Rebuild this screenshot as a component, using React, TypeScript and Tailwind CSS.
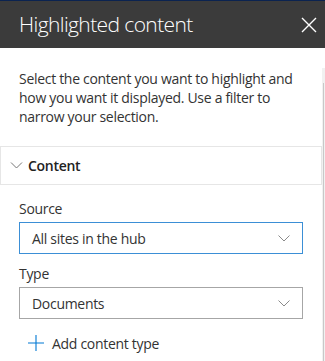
function Chevron({ className }: { className?: string }) {
    return (
        <svg viewBox="0 0 12 7" className={className} fill="none" stroke="currentColor" strokeWidth="1">
            <path d="M0.5 0.5 L6 6 L11.5 0.5" />
        </svg>
    );
}

function Dropdown({ value, active }: { value: string; active?: boolean }) {
    return (
        <div
            className={`mt-[4px] h-[32px] flex items-center justify-between pl-[12px] pr-[12px] border ${
                active ? "border-[#3b8fd6]" : "border-[#a6a6a6]"
            }`}
        >
            <span className="text-[14px] text-[#333]">{value}</span>
            <Chevron className="w-[12px] h-[7px] text-[#8a8a8a]" />
        </div>
    );
}

export default function App() {
    return (
        <div className="w-[325px] h-[361px] overflow-hidden bg-white font-['Open_Sans',sans-serif] tracking-[-0.3px]">
            <header className="border-t border-[#0b2350] h-[48px] bg-[#3b3b3b] flex items-center justify-between pl-[19px] pr-[8px]">
                <h1 className="text-[21px] font-light text-white tracking-[-0.6px]">Highlighted content</h1>
                <svg viewBox="0 0 16 16" className="w-[16px] h-[16px] text-white" stroke="currentColor" strokeWidth="1.4">
                    <path d="M1 1 L15 15 M15 1 L1 15" />
                </svg>
            </header>

            <div className="flex">
                <main className="w-[322px] shrink-0">
                    <p className="pt-[21px] px-[19px] text-[14px] leading-[19px] text-[#333]">
                        Select the content you want to highlight and how you want it displayed. Use a filter to narrow
                        your selection.
                    </p>

                    <div className="mt-[20px] h-[39px] border border-[#e6e6e6] flex items-center pl-[9px]">
                        <Chevron className="w-[13px] h-[7px] text-[#777]" />
                        <span className="ml-[5px] text-[14px] font-semibold text-[#222]">Content</span>
                    </div>

                    <div className="px-[19px]">
                        <div className="mt-[14px] text-[14px] leading-[19px] text-[#333]">Source</div>
                        <Dropdown value="All sites in the hub" active />

                        <div className="mt-[10px] text-[14px] leading-[19px] text-[#333]">Type</div>
                        <Dropdown value="Documents" />

                        <div className="mt-[8px] h-[32px] flex items-center pl-[9px]">
                            <svg viewBox="0 0 16 16" className="w-[16px] h-[16px] text-[#0078d4]" stroke="currentColor" strokeWidth="1.1">
                                <path d="M8 0 V16 M0 8 H16" />
                            </svg>
                            <span className="ml-[8px] text-[14px] text-[#333]">Add content type</span>
                        </div>
                    </div>
                </main>
                <div className="w-[3px] mt-[20px] h-[300px] bg-[#f1f1f1] flex justify-center">
                    <div className="w-[1px] mt-[15px] h-[280px] bg-[#c8c8c8]" />
                </div>
            </div>
        </div>
    );
}
